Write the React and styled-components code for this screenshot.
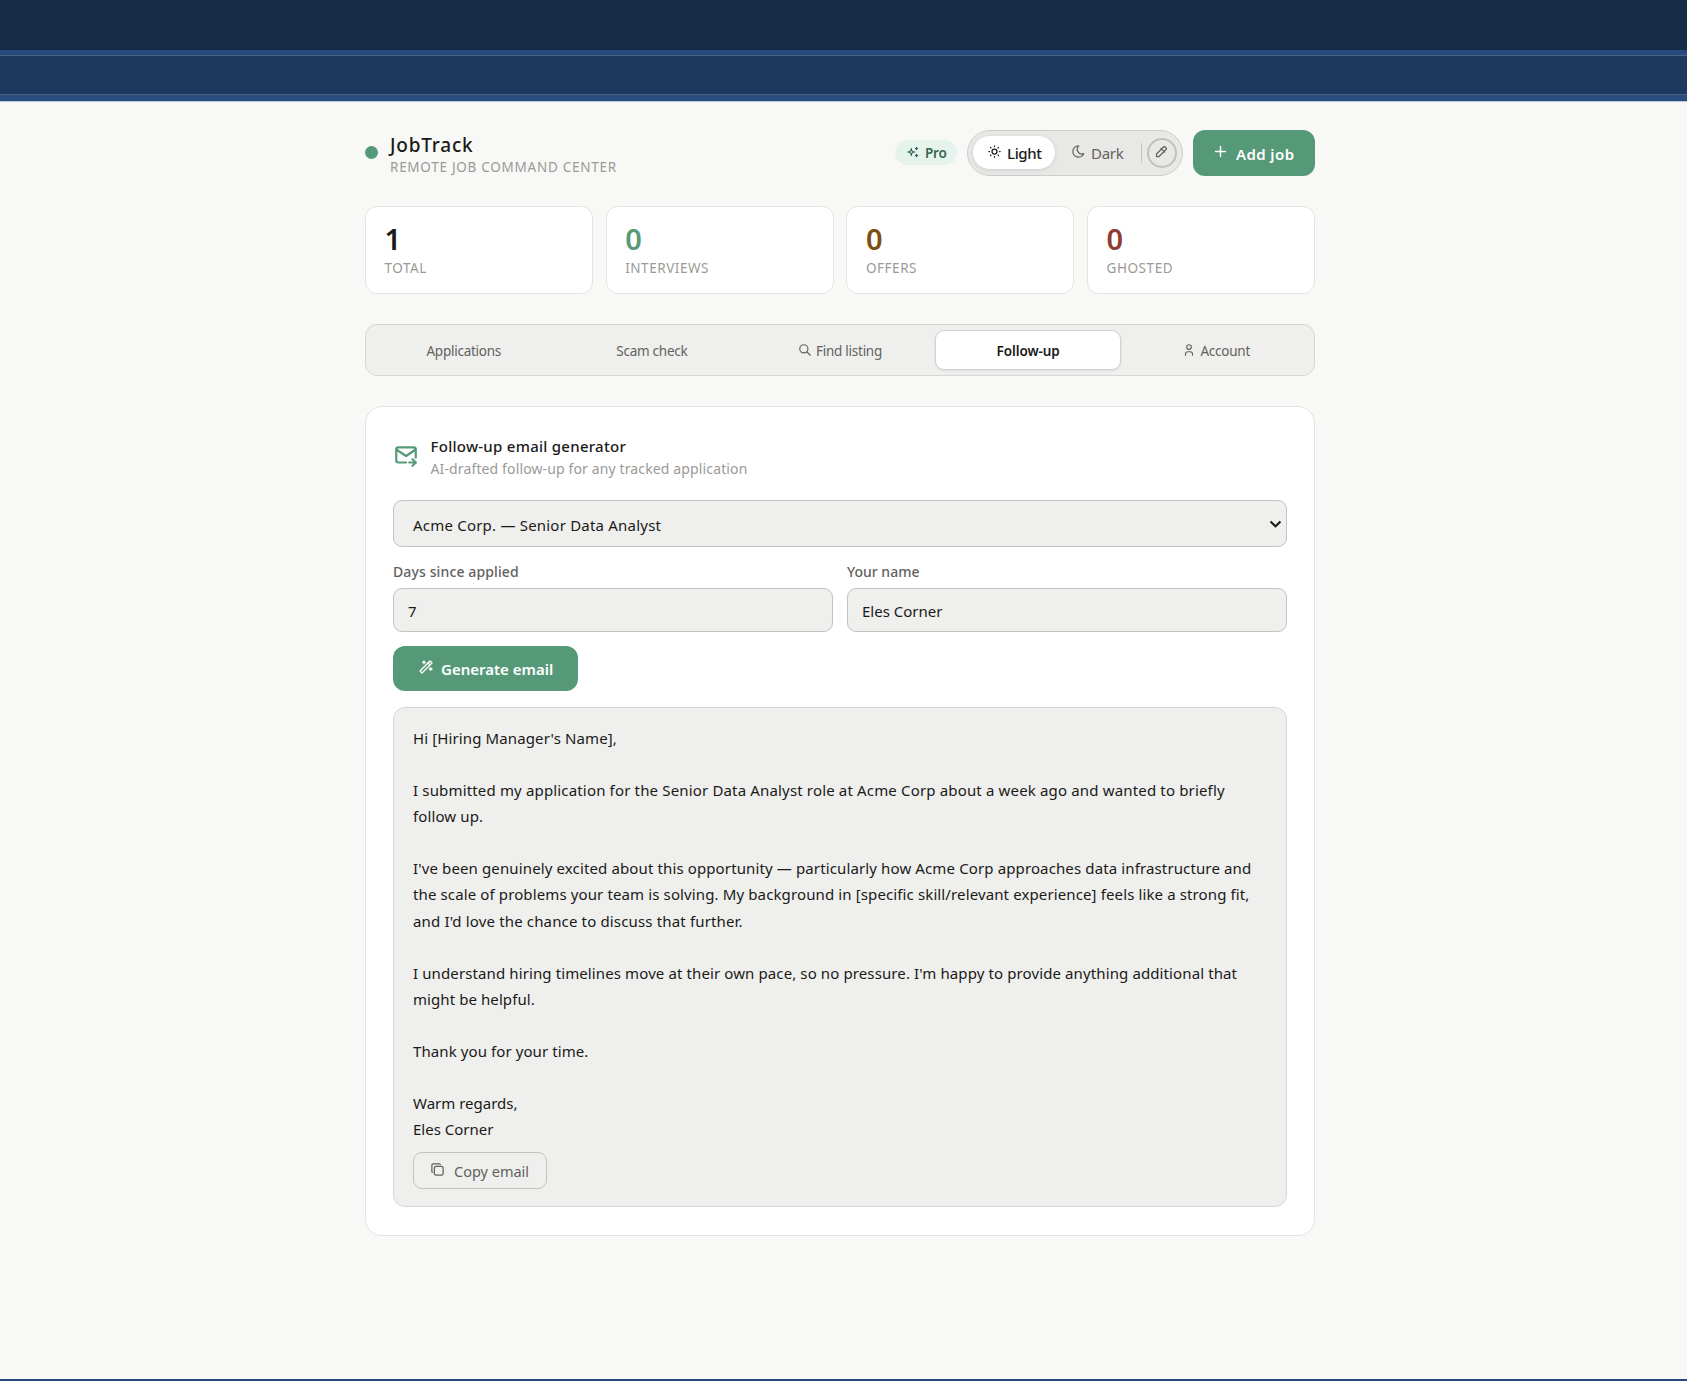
import React from "react";
import styled, { createGlobalStyle } from "styled-components";
import {
  TbSparkles,
  TbSun,
  TbMoon,
  TbColorPicker,
  TbPlus,
  TbSearch,
  TbUser,
  TbMailForward,
  TbWand,
  TbCopy,
} from "react-icons/tb";

const GlobalStyle = createGlobalStyle`
  * {
    box-sizing: border-box;
  }
  body {
    margin: 0;
    background-color: #f8f8f6;
    color: #1a1a18;
    font-family: "Noto Sans", "Open Sans", sans-serif;
  }
  button, input, select {
    font-family: inherit;
    margin: 0;
  }
`;

const Page = styled.div`
  height: 1381px;
  display: flex;
  flex-direction: column;
  overflow: hidden;
`;

const TopBar = styled.div`
  height: 50px;
  flex-shrink: 0;
  background-color: #162b46;
`;

const SubBar = styled.div`
  height: 51px;
  flex-shrink: 0;
  background-color: #1f385e;
  background-clip: padding-box;
  border-top: 5px solid #284a7a;
  border-bottom: 6px solid #2b4d7d;
  box-shadow: inset 0 1px 0 #4c6284, inset 0 -1px 0 #4c6284,
    0 1px 0 #b9c6d6;
`;

const BottomLine = styled.div`
  height: 2px;
  flex-shrink: 0;
  margin-top: auto;
  background-color: #284a7a;
`;

const Container = styled.main`
  width: 950px;
  margin-left: 365px;
  padding-top: 29px;
`;

const Header = styled.header`
  display: flex;
  align-items: center;
  height: 46px;
`;

const Dot = styled.span`
  width: 13px;
  height: 13px;
  border-radius: 50%;
  background-color: #559979;
  margin: 0 12px 1px 0;
`;

const Brand = styled.div`
  flex: 1;
  padding-top: 2px;
`;

const Text = styled.span`
  letter-spacing: ${(props) => props.$track || 0}px;
  white-space: nowrap;
`;

const Logo = styled.h1`
  margin: 0;
  font-size: 19px;
  line-height: 26px;
  font-weight: 500;
`;

const Tagline = styled.p`
  margin: 0;
  font-size: 13.5px;
  line-height: 18px;
  color: #9a9a96;
`;

const ProBadge = styled.span`
  display: flex;
  align-items: center;
  gap: 5px;
  width: 62px;
  height: 25px;
  padding-left: 11px;
  border-radius: 13px;
  background-color: #e6f3ed;
  color: #34694f;
  font-size: 13.5px;
  font-weight: 600;
  margin: 0 10px 1px 0;

  svg {
    margin-bottom: 1px;
  }
`;

const Toggle = styled.div`
  display: flex;
  align-items: center;
  width: 216px;
  height: 46px;
  padding: 0 5px;
  border: 1px solid #cdcdcb;
  border-radius: 23px;
  background-color: #e8e8e6;
  margin-right: 10px;
`;

const ToggleOption = styled.button`
  display: flex;
  align-items: center;
  gap: 5px;
  width: ${(props) => (props.$active ? 82 : 86)}px;
  height: 33px;
  margin-bottom: 1px;
  padding: 1px 0 0 ${(props) => (props.$active ? 14 : 16)}px;
  border: none;
  border-radius: 17px;
  font-size: 15px;
  font-weight: ${(props) => (props.$active ? 500 : 400)};
  color: ${(props) => (props.$active ? "#1a1a18" : "#62625e")};
  background-color: ${(props) => (props.$active ? "#fff" : "transparent")};
  box-shadow: ${(props) =>
    props.$active ? "0 1px 4px rgba(0, 0, 0, 0.12)" : "none"};

  svg {
    margin-bottom: 3px;
  }
`;

const Divider = styled.span`
  width: 1px;
  height: 20px;
  background-color: #c4c4c1;
  margin-right: 5px;
`;

const PickerButton = styled.button`
  display: flex;
  align-items: center;
  justify-content: center;
  width: 30px;
  height: 30px;
  padding: 0 1px 3px 0;
  border: 2px solid #c0c0bd;
  border-radius: 50%;
  background-color: transparent;
  color: #62625e;
`;

const PrimaryButton = styled.button`
  display: flex;
  align-items: center;
  gap: 7px;
  width: ${(props) => props.$width}px;
  height: ${(props) => props.$height}px;
  padding: 1px 0 0 ${(props) => props.$indent}px;
  border: none;
  border-radius: 12px;
  background-color: #559979;
  color: #fff;
  font-size: 15px;
  font-weight: 600;

  svg {
    margin-bottom: 4px;
  }
`;

const Stats = styled.section`
  display: grid;
  grid-template-columns: repeat(4, 1fr);
  gap: 12.8px;
  margin-top: 30px;
`;

const StatCard = styled.div`
  height: 88px;
  padding: 14px 18.5px;
  border: 1px solid #e4e4e2;
  border-radius: 12px;
  background-color: #fff;
`;

const StatValue = styled.div`
  font-size: 29px;
  line-height: 36px;
  font-weight: 600;
  color: ${(props) => props.$color};
`;

const StatLabel = styled.div`
  margin-top: 1px;
  font-size: 13.5px;
  line-height: 20px;
  color: #9a9a96;
`;

const Tabs = styled.nav`
  display: grid;
  grid-template-columns: repeat(5, 1fr);
  gap: 2.6px;
  height: 52px;
  margin-top: 30px;
  padding: 5px;
  border: 1px solid #d6d6d4;
  border-radius: 12px;
  background-color: #efefed;
`;

const Tab = styled.button`
  display: flex;
  align-items: center;
  justify-content: center;
  gap: 4px;
  padding: 2px 0 0;
  border: 1px solid ${(props) => (props.$active ? "#d0d0ce" : "transparent")};
  border-radius: 9px;
  background-color: ${(props) => (props.$active ? "#fff" : "transparent")};
  box-shadow: ${(props) =>
    props.$active ? "0 1px 3px rgba(0, 0, 0, 0.08)" : "none"};
  font-size: 13.5px;
  font-weight: ${(props) => (props.$active ? 600 : 400)};
  color: ${(props) => (props.$active ? "#1a1a18" : "#62625e")};

  svg {
    margin-bottom: 2px;
  }
`;

const Panel = styled.section`
  height: 830px;
  margin-top: 30px;
  padding: 27px;
  border: 1px solid #e4e4e2;
  border-radius: 17px;
  background-color: #fff;
`;

const PanelHeader = styled.div`
  display: flex;
  align-items: center;
  gap: 11.5px;
  height: 45px;
  color: #559979;

  svg {
    margin-bottom: 2px;
  }
`;

const PanelTitle = styled.h2`
  margin: 0;
  font-size: 15px;
  line-height: 23px;
  font-weight: 500;
  color: #1a1a18;
`;

const PanelSubtitle = styled.p`
  margin: 0;
  font-size: 14px;
  line-height: 21px;
  color: #9a9a96;
`;

const SelectBox = styled.div`
  display: flex;
  align-items: center;
  justify-content: space-between;
  height: 47px;
  margin-top: 21px;
  padding: 2px 4px 0 19px;
  border: 1px solid #c3c3c1;
  border-radius: 9px;
  background-color: #efefed;
  font-size: 15px;
`;

const Fields = styled.div`
  display: grid;
  grid-template-columns: 1fr 1fr;
  gap: 14px;
  margin-top: 14px;
`;

const Label = styled.label`
  display: block;
  height: 27px;
  font-size: 14px;
  line-height: 22px;
  font-weight: 500;
  color: #62625e;
`;

const Input = styled.input`
  display: block;
  width: 100%;
  height: 44px;
  padding: 2px 14px 0;
  border: 1px solid #c3c3c1;
  border-radius: 9px;
  outline: none;
  background-color: #efefed;
  font-size: 15px;
  color: #1a1a18;
`;

const Actions = styled.div`
  margin-top: 14px;
`;

const Draft = styled.div`
  height: 500px;
  margin-top: 16px;
  padding: 17px 19px;
  border: 1px solid #d6d6d4;
  border-radius: 12px;
  background-color: #efefed;
`;

const Line = styled.div`
  height: 26.08px;
  font-size: 15px;
  line-height: 26.08px;
`;

const CopyButton = styled.button`
  display: flex;
  align-items: center;
  gap: 9px;
  width: 134px;
  height: 37px;
  margin-top: 9.7px;
  padding: 1px 0 0 16px;
  border: 1px solid #c3c3c1;
  border-radius: 9px;
  background-color: transparent;
  color: #62625e;
  font-size: 14.5px;

  svg {
    margin-bottom: 3px;
  }
`;

const stats = [
  { value: "1", label: "TOTAL", color: "#1a1a18" },
  { value: "0", label: "INTERVIEWS", color: "#559979" },
  { value: "0", label: "OFFERS", color: "#7a4f16" },
  { value: "0", label: "GHOSTED", color: "#8f3b2f" },
];

const tabs = [
  { label: "Applications" },
  { label: "Scam check" },
  { label: "Find listing", icon: <TbSearch size={14} /> },
  { label: "Follow-up", active: true },
  { label: "Account", icon: <TbUser size={14} /> },
];

const email = [
  { text: "Hi [Hiring Manager's Name],", track: 0.12 },
  { text: "" },
  {
    text: "I submitted my application for the Senior Data Analyst role at Acme Corp about a week ago and wanted to briefly",
    track: 0.16,
  },
  { text: "follow up.", track: 0.12 },
  { text: "" },
  {
    text: "I've been genuinely excited about this opportunity — particularly how Acme Corp approaches data infrastructure and",
    track: 0.126,
  },
  {
    text: "the scale of problems your team is solving. My background in [specific skill/relevant experience] feels like a strong fit,",
    track: 0.122,
  },
  { text: "and I'd love the chance to discuss that further.", track: 0.155 },
  { text: "" },
  {
    text: "I understand hiring timelines move at their own pace, so no pressure. I'm happy to provide anything additional that",
    track: 0.112,
  },
  { text: "might be helpful.", track: 0.08 },
  { text: "" },
  { text: "Thank you for your time.", track: 0.09 },
  { text: "" },
  { text: "Warm regards," },
  { text: "Eles Corner" },
];

const App = () => {
  return (
    <>
      <GlobalStyle />
      <Page>
        <TopBar />
        <SubBar />
        <Container>
          <Header>
            <Dot />
            <Brand>
              <Logo>
                <Text $track={0.8}>JobTrack</Text>
              </Logo>
              <Tagline>
                <Text $track={0.73}>REMOTE JOB COMMAND CENTER</Text>
              </Tagline>
            </Brand>
            <ProBadge>
              <TbSparkles size={14} />
              <Text $track={-0.2}>Pro</Text>
            </ProBadge>
            <Toggle>
              <ToggleOption $active>
                <TbSun size={15} />
                <Text $track={-0.35}>Light</Text>
              </ToggleOption>
              <ToggleOption>
                <TbMoon size={15} />
                <Text $track={-0.3}>Dark</Text>
              </ToggleOption>
              <Divider />
              <PickerButton>
                <TbColorPicker size={15} />
              </PickerButton>
            </Toggle>
            <PrimaryButton $width={122} $height={46} $indent={19}>
              <TbPlus size={17} />
              <Text $track={0.4}>Add job</Text>
            </PrimaryButton>
          </Header>
          <Stats>
            {stats.map((stat) => (
              <StatCard key={stat.label}>
                <StatValue $color={stat.color}>{stat.value}</StatValue>
                <StatLabel>
                  <Text $track={0.55}>{stat.label}</Text>
                </StatLabel>
              </StatCard>
            ))}
          </Stats>
          <Tabs>
            {tabs.map((tab) => (
              <Tab key={tab.label} $active={tab.active}>
                {tab.icon}
                <Text $track={tab.active ? -0.1 : -0.25}>{tab.label}</Text>
              </Tab>
            ))}
          </Tabs>
          <Panel>
            <PanelHeader>
              <TbMailForward size={26} />
              <div>
                <PanelTitle>
                  <Text $track={0.27}>Follow-up email generator</Text>
                </PanelTitle>
                <PanelSubtitle>
                  <Text $track={0.13}>
                    AI-drafted follow-up for any tracked application
                  </Text>
                </PanelSubtitle>
              </div>
            </PanelHeader>
            <SelectBox>
              <Text $track={0.21}>Acme Corp. — Senior Data Analyst</Text>
              <svg width="13" height="9" viewBox="0 0 13 9">
                <path
                  d="M1.5 1.5 6.5 6.3 11.5 1.5"
                  fill="none"
                  stroke="#1a1a18"
                  strokeWidth="2"
                />
              </svg>
            </SelectBox>
            <Fields>
              <div>
                <Label>
                  <Text $track={0.12}>Days since applied</Text>
                </Label>
                <Input defaultValue="7" />
              </div>
              <div>
                <Label>
                  <Text>Your name</Text>
                </Label>
                <Input defaultValue="Eles Corner" />
              </div>
            </Fields>
            <Actions>
              <PrimaryButton $width={185} $height={45} $indent={25}>
                <TbWand size={16} />
                <Text>Generate email</Text>
              </PrimaryButton>
            </Actions>
            <Draft>
              {email.map((line, i) => (
                <Line key={i}>
                  <Text $track={line.track}>{line.text}</Text>
                </Line>
              ))}
              <CopyButton>
                <TbCopy size={15} />
                <Text>Copy email</Text>
              </CopyButton>
            </Draft>
          </Panel>
        </Container>
        <BottomLine />
      </Page>
    </>
  );
};

export default App;
